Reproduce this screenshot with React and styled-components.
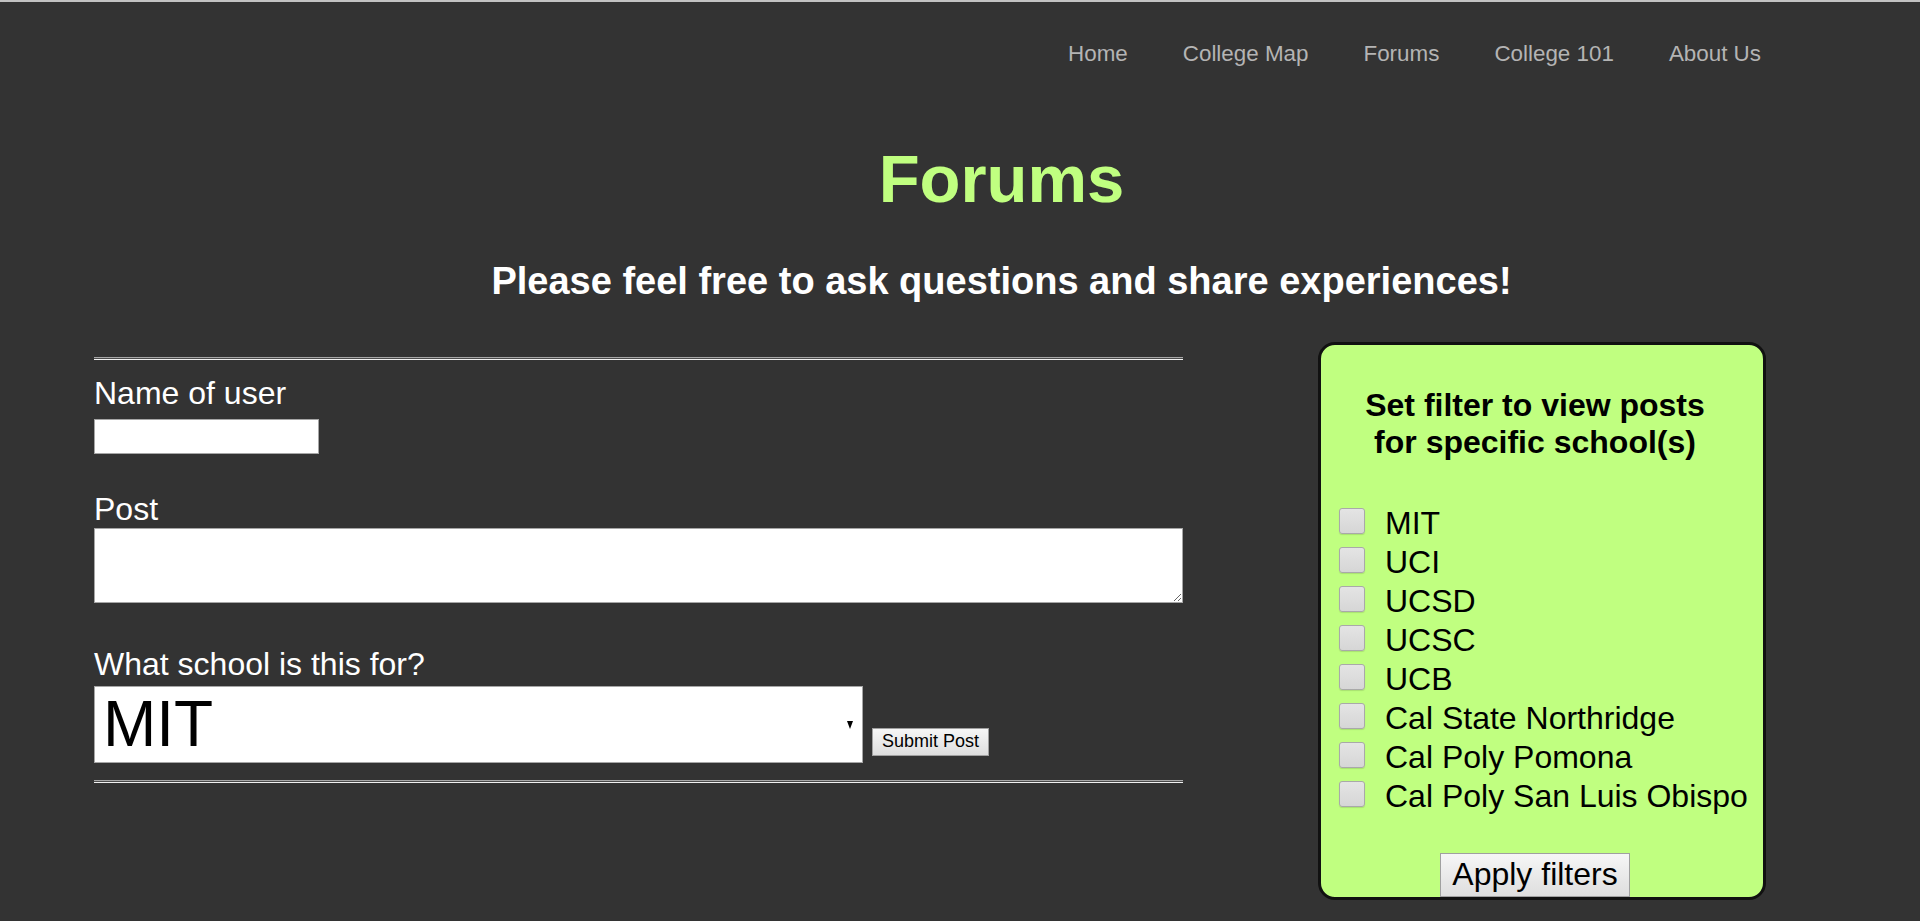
import React from 'react';
import styled, { createGlobalStyle } from 'styled-components';

const GlobalStyle = createGlobalStyle`
  html, body {
    margin: 0;
    padding: 0;
    background: #333333;
  }

  body {
    font-family: 'Liberation Sans', Arial, sans-serif;
    color: #ffffff;
    border-top: 2px solid #c2c2c2;
  }
`;

const StyledNav = styled.nav`
  display: flex;
  justify-content: flex-end;
  gap: 55px;
  padding: 39px 159px 0 0;

  a {
    font-size: 22.4px;
    line-height: 25.7px;
    color: #b4b4b4;
    text-decoration: none;
  }
`;

const StyledMain = styled.main`
  margin: 0 11px 0 94px;

  .inner {
    display: flex;
    align-items: flex-start;
  }
`;

const Title = styled.h1`
  margin: 73px 0 0;
  text-align: center;
  font-size: 67px;
  line-height: 77px;
  font-weight: bold;
  color: #c0ff80;
`;

const Subtitle = styled.h2`
  margin: 43px 0 40px;
  text-align: center;
  font-size: 38px;
  line-height: 42.5px;
  font-weight: bold;
  color: #ffffff;
`;

const Rule = styled.hr`
  margin: 0;
  height: 1px;
  border: 0;
  border-top: 1px solid #a8a8a8;
  border-bottom: 1px solid #f0f0f0;
  background: #4a4a4a;
`;

const StyledForm = styled.form`
  width: 60%;
  margin-top: 15px;
  display: flex;
  flex-direction: column;
  font-size: 32px;
  line-height: 36.8px;

  label {
    display: block;
  }
`;

const Field = styled.div`
  display: flex;
  flex-direction: column;
  align-items: flex-start;
  margin-top: ${props => props.$top}px;
`;

const NameInput = styled.input`
  box-sizing: border-box;
  width: 225px;
  height: 35px;
  margin-top: 7px;
  border: 1px solid #a6a6a6;
  background: #fff;
  font-size: 18px;
`;

const PostArea = styled.textarea`
  box-sizing: border-box;
  width: 100%;
  height: 75px;
  border: 1px solid #a6a6a6;
  background: #fff;
  font-size: 18px;
`;

const SchoolRow = styled.div`
  display: flex;
  align-items: flex-end;
  gap: 9px;
  margin-top: 3px;
  margin-bottom: 17px;
`;

const SelectWrap = styled.div`
  position: relative;
  width: 769px;
  height: 77px;

  &:after {
    content: '';
    position: absolute;
    right: 10px;
    top: 35px;
    border-left: 3.5px solid transparent;
    border-right: 3.5px solid transparent;
    border-top: 8px solid #000;
    pointer-events: none;
  }

  select {
    appearance: none;
    box-sizing: border-box;
    width: 100%;
    height: 100%;
    padding: 0 0 0 8px;
    border: 1px solid #a6a6a6;
    border-radius: 0;
    background: #fff;
    color: #000;
    font-family: 'Liberation Sans', Arial, sans-serif;
    font-size: 64px;
  }
`;

const Button = styled.button`
  box-sizing: border-box;
  padding: 0 ${props => props.$pad}px;
  height: ${props => props.$height}px;
  border: 1px solid #a0a0a0;
  border-radius: 0;
  background: linear-gradient(#f6f6f6, #dedede);
  color: #000;
  font-family: 'Liberation Sans', Arial, sans-serif;
  font-size: ${props => props.$size}px;
  white-space: nowrap;
  cursor: pointer;
`;

const SubmitButton = styled(Button)`
  margin-bottom: 7px;
`;

const StyledPanel = styled.aside`
  box-sizing: border-box;
  width: 448px;
  height: 558px;
  margin-left: 135px;
  padding: 42px 24px 0 10px;
  display: flex;
  flex-direction: column;
  background: #c0ff80;
  border: 3px solid #111;
  border-radius: 17px;
  color: #000;

  h3 {
    margin: 0 0 43px;
    text-align: center;
    font-size: 32px;
    line-height: 36.8px;
  }
`;

const FilterList = styled.ul`
  margin: 0;
  padding: 0 0 0 8px;
  list-style: none;
`;

const FilterItem = styled.li`
  display: flex;
  align-items: flex-start;
  gap: 20px;
  height: 39px;
  font-size: 32px;
  line-height: 39px;
  white-space: nowrap;

  input {
    appearance: none;
    box-sizing: border-box;
    flex: none;
    width: 26px;
    height: 26px;
    margin: 4px 0 0;
    border: 1px solid #a9a9a9;
    border-radius: 3px;
    background: linear-gradient(#e4e4e4, #d6d6d6);
    box-shadow: 0 1px 1px rgba(0, 0, 0, 0.12);
  }
`;

const ApplyButton = styled(Button)`
  align-self: center;
  margin-top: 37px;
`;

const schools = [
  'MIT',
  'UCI',
  'UCSD',
  'UCSC',
  'UCB',
  'Cal State Northridge',
  'Cal Poly Pomona',
  'Cal Poly San Luis Obispo',
];

const navLinks = ['Home', 'College Map', 'Forums', 'College 101', 'About Us'];

const App = () => (
  <>
    <GlobalStyle />
    <StyledNav>
      {navLinks.map(link => (
        <a key={link} href="#">
          {link}
        </a>
      ))}
    </StyledNav>

    <StyledMain>
      <Title>Forums</Title>
      <Subtitle>Please feel free to ask questions and share experiences!</Subtitle>

      <div className="inner">
        <StyledForm onSubmit={e => e.preventDefault()}>
          <Rule />

          <Field $top={15}>
            <label htmlFor="user">Name of user</label>
            <NameInput id="user" type="text" />
          </Field>

          <Field $top={37}>
            <label htmlFor="post">Post</label>
            <PostArea id="post" />
          </Field>

          <Field $top={43}>
            <label htmlFor="school">What school is this for?</label>
          </Field>

          <SchoolRow>
            <SelectWrap>
              <select id="school" defaultValue="MIT">
                {schools.map(school => (
                  <option key={school}>{school}</option>
                ))}
              </select>
            </SelectWrap>
            <SubmitButton type="submit" $size={18} $pad={9} $height={28}>
              Submit Post
            </SubmitButton>
          </SchoolRow>

          <Rule />
        </StyledForm>

        <StyledPanel>
          <h3>
            Set filter to view posts
            <br />
            for specific school(s)
          </h3>

          <FilterList>
            {schools.map(school => (
              <FilterItem key={school}>
                <input type="checkbox" aria-label={school} />
                <span>{school}</span>
              </FilterItem>
            ))}
          </FilterList>

          <ApplyButton type="button" $size={32} $pad={11} $height={44}>
            Apply filters
          </ApplyButton>
        </StyledPanel>
      </div>
    </StyledMain>
  </>
);

export default App;
